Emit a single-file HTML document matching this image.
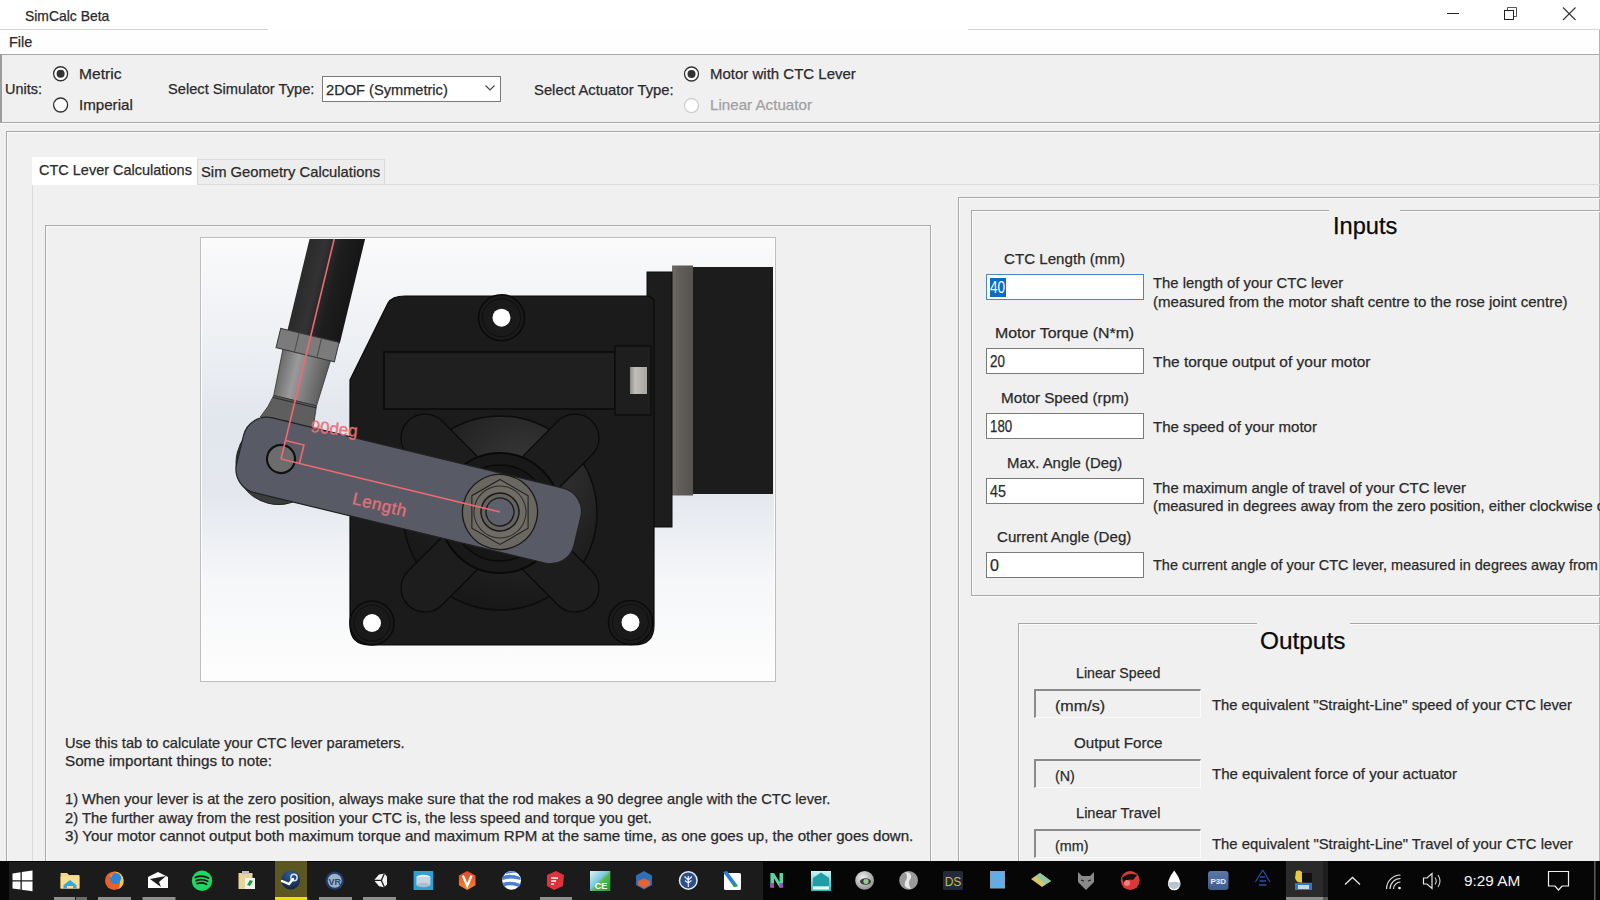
<!DOCTYPE html>
<html><head><meta charset="utf-8"><title>SimCalc Beta</title>
<style>
html,body{margin:0;padding:0}
body{width:1600px;height:900px;overflow:hidden;position:relative;background:#f0f0f0;font-family:"Liberation Sans",sans-serif;color:#000}
.a{position:absolute;box-sizing:border-box}
.t{position:absolute;white-space:pre;transform-origin:0 0;font-family:"Liberation Sans",sans-serif;-webkit-text-stroke:0.25px currentColor}
.hl{position:absolute;height:1px;background:#a9a9a9}
.vl{position:absolute;width:1px;background:#a9a9a9}
.wl{position:absolute;height:1px;background:#fff}
.wv{position:absolute;width:1px;background:#fff}
.tb{position:absolute;box-sizing:border-box;background:#fff;border:1px solid #7a7a7a}
.ob{position:absolute;box-sizing:border-box;background:#f0f0f0;border-top:2px solid #8a8a8a;border-left:2px solid #8a8a8a;border-bottom:1px solid #fbfbfb;border-right:1px solid #fbfbfb}
</style></head><body>
<!-- title bar -->
<div class="a" style="left:0;top:0;width:1600px;height:30px;background:#fff"></div>
<div class="a" style="left:0;top:29px;width:268px;height:1px;background:#d6d6d6"></div>
<div class="a" style="left:968px;top:29px;width:632px;height:1px;background:#d6d6d6"></div>
<svg class="a" style="left:1440px;top:0" width="160" height="30">
 <line x1="7" y1="13.5" x2="19" y2="13.5" stroke="#222" stroke-width="1"/>
 <path d="M67.5 10.5 V7.5 H76.5 V16.5 H73.5" fill="none" stroke="#555" stroke-width="1"/>
 <rect x="64.5" y="10.5" width="9" height="9" fill="none" stroke="#222" stroke-width="1"/>
 <path d="M123 7.5 L135.5 20 M135.5 7.5 L123 20" stroke="#333" stroke-width="1.1"/>
</svg>
<!-- menu bar -->
<div class="a" style="left:0;top:30px;width:1600px;height:24px;background:#fefefe"></div>
<div class="a" style="left:0;top:54px;width:1600px;height:1px;background:#a8a8a8"></div>
<div class="a" style="left:1598.5px;top:30px;width:1px;height:831px;background:#b4b4b4"></div>
<!-- toolbar panel -->
<div class="a" style="left:0;top:54px;width:2px;height:69px;background:#9c9c9c"></div>
<div class="a" style="left:0;top:122px;width:1600px;height:1px;background:#a8a8a8"></div>
<div class="a" style="left:0;top:123px;width:1600px;height:1px;background:#fafafa"></div>
<svg class="a" style="left:0;top:55px" width="900" height="66">
 <circle cx="60.6" cy="18.75" r="7" fill="#fff" stroke="#333" stroke-width="1.3"/>
 <circle cx="60.6" cy="18.75" r="4" fill="#333"/>
 <circle cx="60.6" cy="50" r="7" fill="#fff" stroke="#333" stroke-width="1.3"/>
 <circle cx="691.5" cy="19" r="7" fill="#fff" stroke="#333" stroke-width="1.3"/>
 <circle cx="691.5" cy="19" r="4" fill="#333"/>
 <circle cx="691.5" cy="50.6" r="7" fill="#fff" stroke="#cfcfcf" stroke-width="1.3"/>
</svg>
<div class="tb" style="left:322px;top:75.5px;width:179px;height:26px"></div>
<svg class="a" style="left:480px;top:80px" width="20" height="16"><path d="M5.5 5.5 L10 10 L14.5 5.5" fill="none" stroke="#444" stroke-width="1.1"/></svg>
<!-- main panel -->
<div class="a" style="left:6px;top:130.5px;width:1594px;height:1px;background:#a8a8a8"></div>
<div class="a" style="left:7px;top:131.5px;width:1593px;height:1px;background:#fbfbfb"></div>
<div class="a" style="left:6px;top:131px;width:1px;height:730px;background:#a8a8a8"></div>
<div class="a" style="left:7px;top:132px;width:1px;height:729px;background:#fbfbfb"></div>
<!-- tabs -->
<div class="a" style="left:197px;top:158.5px;width:188px;height:26px;background:#ededed;border:1px solid #dadada;border-bottom:none"></div>
<div class="a" style="left:32px;top:184px;width:1568px;height:1px;background:#dadada"></div>
<div class="a" style="left:32px;top:184px;width:1px;height:677px;background:#dadada"></div>
<div class="a" style="left:32px;top:157px;width:165px;height:28px;background:#fff"></div>
<!-- image group box -->
<div class="a" style="left:45px;top:224.5px;width:886px;height:1px;background:#a8a8a8"></div>
<div class="a" style="left:46px;top:225.5px;width:884px;height:1px;background:#fbfbfb"></div>
<div class="a" style="left:45px;top:225px;width:1px;height:636px;background:#a8a8a8"></div>
<div class="a" style="left:46px;top:226px;width:1px;height:635px;background:#fbfbfb"></div>
<div class="a" style="left:930px;top:225px;width:1px;height:636px;background:#a8a8a8"></div>
<div class="a" style="left:931px;top:225px;width:1px;height:636px;background:#fbfbfb"></div>
<!-- picture -->
<div class="a" style="left:200px;top:237px;width:576px;height:445px;background:#fff;border:1px solid #bdbdbd"></div>
<svg class="a" style="left:0;top:0" width="1600" height="900" viewBox="0 0 1600 900">
<defs>
 <linearGradient id="bg" x1="0" y1="0" x2="0" y2="1">
  <stop offset="0" stop-color="#fafafb"/>
  <stop offset="0.18" stop-color="#f0f2f5"/>
  <stop offset="0.42" stop-color="#e2e6ed"/>
  <stop offset="0.58" stop-color="#e4e8ee"/>
  <stop offset="0.78" stop-color="#f6f7f9"/>
  <stop offset="1" stop-color="#fdfdfd"/>
 </linearGradient>
 <radialGradient id="flg" cx="0.62" cy="0.3" r="0.7">
  <stop offset="0" stop-color="#3a3a3a"/>
  <stop offset="0.6" stop-color="#222"/>
  <stop offset="1" stop-color="#181818"/>
 </radialGradient>
 <linearGradient id="rod" x1="0" y1="0" x2="1" y2="0">
  <stop offset="0" stop-color="#2a2a2a"/>
  <stop offset="0.3" stop-color="#333"/>
  <stop offset="0.6" stop-color="#1e1e1e"/>
  <stop offset="1" stop-color="#161616"/>
 </linearGradient>
 <linearGradient id="rodend" x1="0" y1="0" x2="1" y2="0">
  <stop offset="0" stop-color="#6a6a6a"/>
  <stop offset="0.35" stop-color="#9a9a9a"/>
  <stop offset="1" stop-color="#5a5a5a"/>
 </linearGradient>
 <linearGradient id="ring" x1="0" y1="0" x2="1" y2="0">
  <stop offset="0" stop-color="#6e6a65"/>
  <stop offset="0.3" stop-color="#625f5a"/>
  <stop offset="1" stop-color="#56534f"/>
 </linearGradient>
 <linearGradient id="sq" x1="0" y1="0" x2="1" y2="0">
  <stop offset="0" stop-color="#8e8b86"/>
  <stop offset="0.3" stop-color="#c2bfba"/>
  <stop offset="1" stop-color="#a9a6a1"/>
 </linearGradient>
 <clipPath id="pic"><rect x="202" y="239" width="572" height="441"/></clipPath>
</defs>
<g clip-path="url(#pic)">
 <rect x="202" y="239" width="572" height="441" fill="url(#bg)"/>
 <!-- motor block -->
 <rect x="693" y="267" width="80" height="227" fill="#1c1c1c"/>
 <rect x="672" y="265.5" width="21" height="230" fill="url(#ring)"/>
 <rect x="647" y="272" width="25" height="255" fill="#1d1d1d" stroke="#0c0c0c" stroke-width="1"/>
 <!-- gearbox plate -->
 <path d="M405 296 H649 V296 L654 300 V625 Q654 645 634 645 H370 Q350 645 350 625 V380 L388 303 Q392 296 405 296 Z" fill="#1b1b1b" stroke="#0a0a0a" stroke-width="1.2"/>
 <!-- top hole -->
 <circle cx="501.5" cy="317.7" r="23" fill="#1a1a1a" stroke="#0a0a0a" stroke-width="1.5"/>
 <circle cx="501.5" cy="317.7" r="19" fill="none" stroke="#0e0e0e" stroke-width="1"/>
 <circle cx="501.5" cy="317.7" r="9" fill="#fff"/>
 <!-- slot -->
 <rect x="384" y="352" width="231" height="57" fill="#1f1f1f" stroke="#0a0a0a" stroke-width="1.6"/>
 <rect x="615" y="346" width="36" height="69" fill="#1e1e1e" stroke="#0a0a0a" stroke-width="1.2"/>
 <rect x="630" y="367" width="17" height="27" fill="url(#sq)"/>
 <!-- bottom holes -->
 <circle cx="372" cy="623" r="22" fill="#1a1a1a" stroke="#0a0a0a" stroke-width="1.5"/>
 <circle cx="372" cy="623" r="18" fill="none" stroke="#0e0e0e" stroke-width="1"/>
 <circle cx="372" cy="623" r="9" fill="#fff"/>
 <circle cx="630.5" cy="622.4" r="22" fill="#1a1a1a" stroke="#0a0a0a" stroke-width="1.5"/>
 <circle cx="630.5" cy="622.4" r="18" fill="none" stroke="#0e0e0e" stroke-width="1"/>
 <circle cx="630.5" cy="622.4" r="9" fill="#fff"/>
 <!-- output flange -->
 <circle cx="500" cy="513" r="97" fill="url(#flg)" stroke="#0c0c0c" stroke-width="1.5"/>
 <g transform="translate(500 513) rotate(45)" fill="#1d1d1d" stroke="#0b0b0b" stroke-width="1.3">
  <rect x="-130" y="-24" width="260" height="48" rx="24"/>
  <rect x="-24" y="-130" width="48" height="260" ry="24"/>
 </g>
 <circle cx="500" cy="513" r="60" fill="#191919" stroke="#0a0a0a" stroke-width="2"/>
 <circle cx="500" cy="513" r="48" fill="#161616" stroke="#0a0a0a" stroke-width="1.5"/>
 <!-- rod & lever in rotated frame -->
 <g transform="translate(281 459) rotate(13.6)">
  <rect x="-24" y="-260" width="54" height="134" fill="url(#rod)"/>
  <path d="M-24 -108 L25 -108 L22 -60 L-22 -60 Z" fill="url(#rodend)" stroke="#3a3a3a" stroke-width="0.8"/>
  <path d="M-22 -60 L22 -60 L24 -36 L-30 -36 Q-24 -48 -22 -60 Z" fill="#5e5e5e" stroke="#333" stroke-width="0.8"/>
  <line x1="-22" y1="-58" x2="22" y2="-58" stroke="#2a2a2a" stroke-width="1"/>
  <path d="M-31 -127 L29 -127 L29 -107 L-31 -107 Z" fill="#7b7b7b" stroke="#3a3a3a" stroke-width="1"/>
  <line x1="-12" y1="-127" x2="-12" y2="-107" stroke="#4a4a4a" stroke-width="1"/>
  <line x1="11" y1="-127" x2="11" y2="-107" stroke="#4a4a4a" stroke-width="1"/>
  <circle id="eyebump" cx="-2" cy="4" r="42" fill="#3c3c3e" stroke="#222" stroke-width="1"/>
  <!-- lever -->
  <rect x="-42" y="-38" width="347" height="77" rx="24" fill="#585a65" stroke="#222" stroke-width="1.2"/>
  <circle cx="0" cy="0" r="14" fill="#6c6c6c" stroke="#111" stroke-width="2.2"/>
  <!-- nut -->
  <circle cx="225.3" cy="0" r="37.5" fill="#6a6761" stroke="#1a1a1a" stroke-width="1.3"/>
  <polygon points="225.3,-32.5 253.4,-16.2 253.4,16.2 225.3,32.5 197.2,16.2 197.2,-16.3" transform="rotate(-13.6 225.3 0)" fill="#6f6c66" stroke="#222" stroke-width="1.1"/>
  <circle cx="225.3" cy="0" r="26" fill="none" stroke="#2a2a2a" stroke-width="1"/>
  <circle cx="225.3" cy="0" r="19" fill="#66635e" stroke="#1a1a1a" stroke-width="1.5"/>
  <circle cx="225.3" cy="0" r="14" fill="#5d5f6a" stroke="#1a1a1a" stroke-width="1.3"/>
  <!-- red annotation -->
  <g stroke="#ee6a72" stroke-width="1.6" fill="none">
   <line x1="0" y1="0" x2="0" y2="-260"/>
   <line x1="0" y1="0" x2="225.3" y2="0"/>
   <path d="M0 -19 H19 V0"/>
  </g>
  <text x="22" y="-33" transform="rotate(-8 22 -33)" font-family="Liberation Sans" font-size="17" font-weight="normal" fill="#e8707a" opacity="0.95" stroke="#e8707a" stroke-width="0.4">90deg</text>
  <text x="79" y="27" font-family="Liberation Sans" font-size="17" font-weight="normal" fill="#e0707a" stroke="#e0707a" stroke-width="0.4" letter-spacing="0.6">Length</text>
 </g>
</g>
</svg>

<!-- right outer group -->
<div class="a" style="left:958px;top:197px;width:642px;height:1px;background:#a8a8a8"></div>
<div class="a" style="left:959px;top:198px;width:641px;height:1px;background:#fbfbfb"></div>
<div class="a" style="left:958px;top:197px;width:1px;height:664px;background:#a8a8a8"></div>
<div class="a" style="left:959px;top:198px;width:1px;height:663px;background:#fbfbfb"></div>
<!-- inputs group -->
<div class="a" style="left:970.5px;top:209.5px;width:358px;height:1px;background:#a8a8a8"></div>
<div class="a" style="left:1400px;top:209.5px;width:200px;height:1px;background:#a8a8a8"></div>
<div class="a" style="left:971.5px;top:210.5px;width:357px;height:1px;background:#fbfbfb"></div>
<div class="a" style="left:1400px;top:210.5px;width:200px;height:1px;background:#fbfbfb"></div>
<div class="a" style="left:970.5px;top:209.5px;width:1px;height:386px;background:#a8a8a8"></div>
<div class="a" style="left:971.5px;top:210.5px;width:1px;height:385px;background:#fbfbfb"></div>
<div class="a" style="left:970.5px;top:595px;width:630px;height:1px;background:#a8a8a8"></div>
<div class="a" style="left:970.5px;top:596px;width:630px;height:1px;background:#fbfbfb"></div>
<!-- textboxes -->
<div class="tb" style="left:986px;top:274px;width:158px;height:26px;border-color:#4a86bf"></div>
<div class="a" style="left:990px;top:278px;width:16px;height:18.5px;background:#0b6cc4"></div>
<div class="tb" style="left:986px;top:348px;width:158px;height:26px"></div>
<div class="tb" style="left:986px;top:413px;width:158px;height:26px"></div>
<div class="tb" style="left:986px;top:478px;width:158px;height:26px"></div>
<div class="tb" style="left:986px;top:552px;width:158px;height:26px"></div>
<!-- outputs group -->
<div class="a" style="left:1018px;top:623px;width:239px;height:1px;background:#a8a8a8"></div>
<div class="a" style="left:1350px;top:623px;width:250px;height:1px;background:#a8a8a8"></div>
<div class="a" style="left:1019px;top:624px;width:238px;height:1px;background:#fbfbfb"></div>
<div class="a" style="left:1350px;top:624px;width:250px;height:1px;background:#fbfbfb"></div>
<div class="a" style="left:1018px;top:623px;width:1px;height:238px;background:#a8a8a8"></div>
<div class="a" style="left:1019px;top:624px;width:1px;height:237px;background:#fbfbfb"></div>
<div class="ob" style="left:1034px;top:688.5px;width:167px;height:29px"></div>
<div class="ob" style="left:1034px;top:758.5px;width:167px;height:29.5px"></div>
<div class="ob" style="left:1034px;top:828.5px;width:167px;height:29.5px"></div>
<svg class="a" style="left:0;top:861px" width="1600" height="39" viewBox="0 861 1600 39">
<defs>
 <radialGradient id="ff" cx="0.6" cy="0.3" r="0.8"><stop offset="0" stop-color="#2a6ad8"/><stop offset="0.45" stop-color="#f2a51d"/><stop offset="1" stop-color="#d9401c"/></radialGradient>
 <radialGradient id="stm" cx="0.5" cy="0.2" r="0.9"><stop offset="0" stop-color="#2d5f9a"/><stop offset="1" stop-color="#0e1d3c"/></radialGradient>
 <linearGradient id="vhex" x1="0" y1="0" x2="0" y2="1"><stop offset="0" stop-color="#e8442a"/><stop offset="1" stop-color="#f08a2a"/></linearGradient>
 <linearGradient id="ce" x1="0" y1="0" x2="1" y2="1"><stop offset="0" stop-color="#dff4f2"/><stop offset="0.45" stop-color="#7ac7e0"/><stop offset="0.55" stop-color="#59b84a"/><stop offset="1" stop-color="#1f9a3a"/></linearGradient>
 <linearGradient id="maya" x1="0" y1="0" x2="0" y2="1"><stop offset="0" stop-color="#d6f3f3"/><stop offset="1" stop-color="#29b7bd"/></linearGradient>
 <radialGradient id="eye" cx="0.4" cy="0.35" r="0.7"><stop offset="0" stop-color="#f0f0f0"/><stop offset="1" stop-color="#8d8d8d"/></radialGradient>
 <linearGradient id="p3d" x1="0" y1="0" x2="0" y2="1"><stop offset="0" stop-color="#5a78a8"/><stop offset="1" stop-color="#3f5c8a"/></linearGradient>
</defs>
<rect x="0" y="861" width="1600" height="39" fill="#060606"/>
<rect x="9" y="862" width="754" height="38" fill="#1b1b1b"/>
<!-- windows logo -->
<g fill="#fff">
 <path d="M12.5 873.5 L20.5 872.3 V880.3 H12.5 Z"/>
 <path d="M21.8 872.1 L32.5 870.6 V880.3 H21.8 Z"/>
 <path d="M12.5 881.6 H20.5 V889.6 L12.5 888.5 Z"/>
 <path d="M21.8 881.6 H32.5 V891.2 L21.8 889.8 Z"/>
</g>
<!-- explorer -->
<path d="M60.6 873 H67 L69 875 H79.4 V888.6 H60.6 Z" fill="#f5d67a"/>
<rect x="60.6" y="876.5" width="18.8" height="12" fill="#f8df8e"/>
<path d="M63.5 885 L70 880 L76.5 885 V888.6 H73 V886 H67 V888.6 H63.5 Z" fill="#3fa7e0"/>
<!-- firefox -->
<circle cx="114.3" cy="880.7" r="9.3" fill="#e8602a"/>
<path d="M114.3 871.4 A9.3 9.3 0 0 1 123.6 880.7 A9.3 9.3 0 0 1 118 889.2 Q121 884 119.5 879 Z" fill="#f5c64a"/>
<circle cx="115.5" cy="878.3" r="5.6" fill="#2a86d8"/>
<path d="M109 876 Q111 872 116 872.3 Q112 874 111.5 878 Z" fill="#f07a3a"/>
<!-- mail -->
<path d="M148 877 L158 872 L168 877 V888 H148 Z" fill="#fff"/>
<path d="M150 879 L166 876 L159 882 L161 887 Z" fill="#1b1b1b"/>
<!-- spotify -->
<circle cx="202" cy="880.7" r="10.2" fill="#1ed760"/>
<g stroke="#141414" stroke-width="1.8" fill="none" stroke-linecap="round">
 <path d="M195.5 877.3 Q202 874.6 208.5 878"/>
 <path d="M196.2 880.6 Q202 878.4 207.6 881.2"/>
 <path d="M197 883.6 Q202 882 206.5 884.2"/>
</g>
<!-- clipboard -->
<rect x="238.5" y="873" width="14" height="16" fill="#e8d59a"/>
<rect x="242" y="871" width="7" height="3" fill="#bfbfbf"/>
<rect x="245" y="878" width="10" height="11" fill="#f4f4f4"/>
<path d="M247 885 L250 880 L253 881 L250 886 Z" fill="#1aa03a"/>
<!-- steam highlighted -->
<rect x="275" y="861" width="32" height="39" fill="#5c5620"/>
<rect x="275" y="897" width="32" height="3" fill="#eee000"/>
<circle cx="290.7" cy="880" r="9.4" fill="url(#stm)"/>
<circle cx="294" cy="877.5" r="3.2" fill="none" stroke="#dfe6ee" stroke-width="1.4"/>
<path d="M282 881 L289 884 L293 879" fill="none" stroke="#fff" stroke-width="2.4" stroke-linecap="round"/>
<!-- VR -->
<circle cx="334.7" cy="880.7" r="9.2" fill="#1d3f6e"/>
<circle cx="334.7" cy="880.7" r="7" fill="#9fb0c8"/>
<text x="334.7" y="884.5" text-anchor="middle" font-family="Liberation Sans" font-weight="bold" font-size="9" fill="#2a4a78">VR</text>
<!-- unity -->
<path d="M374 880.3 L379 874.5 L384.5 873.5 L387 876.5 V884.5 L384 887.3 L379 886.3 Z" fill="#f4f4f4"/>
<path d="M374 880.3 H381.3 L384.3 873.8 M381.3 880.3 L384.3 887" fill="none" stroke="#1b1b1b" stroke-width="1.3"/>
<!-- db -->
<rect x="413.6" y="871" width="19.6" height="19" fill="#2ba2d6"/>
<ellipse cx="423.4" cy="877" rx="7" ry="2.2" fill="#e6eef5"/>
<rect x="416.4" y="877" width="14" height="8" fill="#c8d4de"/>
<ellipse cx="423.4" cy="885" rx="7" ry="2.2" fill="#b0bccb"/>
<!-- V hex -->
<path d="M467.2 870.9 L475.5 875.6 V885.2 L467.2 889.9 L458.9 885.2 V875.6 Z" fill="url(#vhex)"/>
<path d="M462.8 875.5 L467.2 886 L471.6 875.5" fill="none" stroke="#fff" stroke-width="2.2"/>
<!-- google earth -->
<circle cx="511.6" cy="880.4" r="9.4" fill="#fff"/>
<path d="M503 876 Q511 873 520 877 L520.5 880 Q511 877 502.5 880 Z" fill="#4a7fdc"/>
<path d="M502.6 883 Q511 880 520.6 884 L519 887 Q511 884 504 886.5 Z" fill="#4a7fdc"/>
<path d="M506 872.5 Q512 870 517 872.5 Q511 872.5 506 874 Z" fill="#4a7fdc"/>
<!-- sketchup -->
<path d="M547 875 L556 871 L564 875 L563 886 L554 890 L547 886 Z" fill="#e0323c"/>
<path d="M551 878 H558 M551 881 H556 M551 884 H554" stroke="#fff" stroke-width="1.4"/>
<rect x="540" y="897" width="32" height="3" fill="#8f8f8f"/>
<!-- CE -->
<rect x="590" y="871" width="20.3" height="20" fill="url(#ce)"/>
<text x="601" y="889" text-anchor="middle" font-family="Liberation Sans" font-weight="bold" font-size="9" fill="#fff">CE</text>
<!-- hex multi -->
<path d="M644 871 L652 875.5 V885 L644 889.5 L636 885 V875.5 Z" fill="#2f6fb8"/>
<path d="M638 881 L644 878.5 L650 881 V885 L644 888.5 L638 885 Z" fill="#e0643a"/>
<!-- sourcetree circle -->
<circle cx="688.3" cy="880.4" r="9.5" fill="#e8eef5"/>
<circle cx="688.3" cy="880.4" r="8" fill="#2c4f8a"/>
<path d="M688.3 887 V876 M688.3 880 L684.5 876.5 M688.3 880 L692 876.5 M688.3 883 L685 880.5 M688.3 883 L691.5 880.5" stroke="#e8eef5" stroke-width="1.2"/>
<!-- sketchbook -->
<rect x="724" y="873" width="17" height="17" rx="1.5" fill="#fafafa"/>
<path d="M723 872 L727 871 L738 886 L734 887 Z" fill="#2f7fd0"/>
<path d="M731 882 L738 886 L734 887 Z" fill="#2aa060"/>
<!-- N -->
<path d="M770.4 873 H774 L779.5 882 V873 H783 V887.6 H779.5 L774 878.5 V887.6 H770.4 Z" fill="#5fd0a0"/>
<path d="M770.4 883 H774 V887.6 H770.4 Z M779.5 883 H783 V887.6 H779.5 Z" fill="#9a4fc0"/>
<!-- maya -->
<rect x="811" y="871" width="20" height="20" fill="url(#maya)"/>
<path d="M813 878 L821 872.5 L829 878 V886 H813 Z" fill="#1f9ea6"/>
<rect x="813" y="886.5" width="16" height="3" fill="#e5f7f7"/>
<!-- eye -->
<circle cx="864.6" cy="880.4" r="9.4" fill="url(#eye)"/>
<ellipse cx="865.5" cy="881.5" rx="5.5" ry="3.2" fill="#3a3a3a"/>
<ellipse cx="866" cy="881.5" rx="2.6" ry="2.4" fill="#8fd08a"/>
<!-- s sphere -->
<circle cx="908.6" cy="880.4" r="9.4" fill="#9a9a9a"/>
<path d="M905 872 Q912 872 911 878 Q907 882 911 889 Q903 888 905 882 Q909 876 905 872 Z" fill="#e8e8e8"/>
<!-- DS -->
<rect x="943" y="871" width="20" height="19" rx="1.5" fill="#222b38"/>
<text x="953" y="886" text-anchor="middle" font-family="Liberation Sans" font-size="12" fill="#d8b74a">DS</text>
<!-- film -->
<rect x="990" y="871" width="15" height="17.5" fill="#8aa0b8"/>
<rect x="992" y="872.5" width="11" height="6.5" fill="#5ab0ee"/>
<rect x="992" y="880.5" width="11" height="6.5" fill="#5ab0ee"/>
<!-- card -->
<path d="M1031 879 L1040 873 L1051 881 L1042 887 Z" fill="#d8c46a"/>
<path d="M1040 873 L1051 881 L1046 884 L1036 876 Z" fill="#8cc7a8"/>
<!-- wolf -->
<path d="M1078 872 L1082 876 H1090 L1094 872 V882 L1086 890 L1078 882 Z" fill="#8a8a8a"/>
<path d="M1081 880 L1084 881 M1091 880 L1088 881" stroke="#222" stroke-width="1.2"/>
<!-- red circle -->
<circle cx="1130.2" cy="880.5" r="9.4" fill="#d83a3a"/>
<path d="M1122 878 Q1128 872 1137 875 L1133 880 Q1128 878 1124 884 Z" fill="#111"/>
<circle cx="1127" cy="883" r="3" fill="#f08080"/>
<!-- drop -->
<path d="M1174.2 870.5 Q1180.5 879 1180.5 884 A6.3 6.3 0 0 1 1167.9 884 Q1167.9 879 1174.2 870.5 Z" fill="#fff"/>
<path d="M1168.2 883 Q1174 880.5 1180.3 883 A6.1 6.1 0 0 1 1168.2 884 Z" fill="#b9c4cf"/>
<!-- P3D -->
<rect x="1208" y="871" width="20.5" height="19" rx="3" fill="url(#p3d)"/>
<text x="1218.2" y="884.3" text-anchor="middle" font-family="Liberation Sans" font-weight="bold" font-size="8" fill="#eef">P3D</text>
<!-- traffic -->
<path d="M1262.7 870 L1270 882 M1262.7 870 L1255.4 882" stroke="#2a4fa8" stroke-width="1.2" fill="none"/>
<path d="M1260 877 H1265 M1259.5 881 H1266 M1259 885 H1266.5" stroke="#2a4fa8" stroke-width="1.6"/>
<!-- python highlighted -->
<rect x="1286" y="861" width="37" height="39" fill="#2a2a2a"/>
<rect x="1323" y="861" width="5" height="39" fill="#1e1e1e"/>
<rect x="1286" y="897" width="37" height="3" fill="#8c8c8c"/>
<rect x="1323" y="897" width="5" height="3" fill="#5a5a5a"/>
<rect x="1295" y="883" width="17" height="7" fill="#2e79c0"/>
<rect x="1298" y="885" width="11" height="4" fill="#c8d6e6"/>
<path d="M1296 871 Q1302 869 1303 875 V882 Q1297 884 1295 878 Z" fill="#e6cc3a"/>
<rect x="1302" y="873" width="10" height="9" fill="#111"/>
<!-- underlines for running apps -->
<rect x="54" y="897" width="21" height="3" fill="#8f8f8f"/>
<rect x="76" y="897" width="11" height="3" fill="#6a6a6a"/>
<rect x="98" y="897" width="33" height="3" fill="#8f8f8f"/>
<rect x="142.5" y="897" width="33" height="3" fill="#8f8f8f"/>
<rect x="319" y="897" width="33" height="3" fill="#8f8f8f"/>
<rect x="363" y="897" width="33" height="3" fill="#8f8f8f"/>
<!-- tray -->
<path d="M1345 884.5 L1352.5 877.5 L1360 884.5" fill="none" stroke="#e8e8e8" stroke-width="1.3"/>
<g fill="none" stroke="#e0e0e0" stroke-width="1.2">
 <path d="M1386.5 889 A14 14 0 0 1 1400.5 875"/>
 <path d="M1390 889 A10.5 10.5 0 0 1 1400.5 878.5"/>
 <path d="M1393.5 889 A7 7 0 0 1 1400.5 882"/>
</g>
<circle cx="1399.5" cy="888" r="1.3" fill="#fff"/>
<path d="M1423.5 878 H1427 L1432 873.5 V888.5 L1427 884 H1423.5 Z" fill="none" stroke="#e8e8e8" stroke-width="1.2"/>
<path d="M1435 877.5 Q1437.5 881 1435 884.5 M1438 875 Q1442 881 1438 887" fill="none" stroke="#cfcfcf" stroke-width="1.1"/>
<path d="M1548.5 871.5 H1568.5 V886 H1562 L1558.5 890 L1555 886 H1548.5 Z" fill="none" stroke="#f0f0f0" stroke-width="1.2"/>
<rect x="1594" y="861" width="1.5" height="39" fill="#5a5a5a"/>
</svg>

<div class="t" id="title" style="left:25.40px;top:8.93px;font-size:14.5px;line-height:14.5px;color:#2a2a2a;transform:scaleX(0.9593);">SimCalc Beta</div>
<div class="t" id="file" style="left:8.50px;top:34.00px;font-size:15px;line-height:15px;color:#2a2a2a;transform:scaleX(0.9658);">File</div>
<div class="t" id="units" style="left:4.80px;top:81.30px;font-size:15px;line-height:15px;color:#2a2a2a;transform:scaleX(0.9642);">Units:</div>
<div class="t" id="metric" style="left:78.60px;top:66.05px;font-size:15px;line-height:15px;color:#2a2a2a;transform:scaleX(1.0398);">Metric</div>
<div class="t" id="imperial" style="left:78.60px;top:97.30px;font-size:15px;line-height:15px;color:#2a2a2a;transform:scaleX(1.0080);">Imperial</div>
<div class="t" id="selsim" style="left:168.20px;top:81.05px;font-size:15px;line-height:15px;color:#2a2a2a;transform:scaleX(0.9770);">Select Simulator Type:</div>
<div class="t" id="combo" style="left:325.70px;top:81.55px;font-size:15px;line-height:15px;color:#2a2a2a;transform:scaleX(0.9744);">2DOF (Symmetric)</div>
<div class="t" id="selact" style="left:533.80px;top:81.70px;font-size:15px;line-height:15px;color:#2a2a2a;transform:scaleX(0.9873);">Select Actuator Type:</div>
<div class="t" id="motor" style="left:710.00px;top:65.90px;font-size:15px;line-height:15px;color:#2a2a2a;transform:scaleX(0.9995);">Motor with CTC Lever</div>
<div class="t" id="linact" style="left:710.00px;top:97.40px;font-size:15px;line-height:15px;color:#a0a0a0;transform:scaleX(1.0102);">Linear Actuator</div>
<div class="t" id="tab1" style="left:38.50px;top:162.30px;font-size:15px;line-height:15px;color:#2a2a2a;transform:scaleX(0.9654);">CTC Lever Calculations</div>
<div class="t" id="tab2" style="left:200.95px;top:164.05px;font-size:15px;line-height:15px;color:#2a2a2a;transform:scaleX(0.9851);">Sim Geometry Calculations</div>
<div class="t" id="l1" style="left:64.70px;top:735.73px;font-size:14.5px;line-height:14.5px;color:#2a2a2a;transform:scaleX(1.0079);">Use this tab to calculate your CTC lever parameters.</div>
<div class="t" id="l2" style="left:64.70px;top:753.98px;font-size:14.5px;line-height:14.5px;color:#2a2a2a;transform:scaleX(1.0484);">Some important things to note:</div>
<div class="t" id="l3" style="left:64.70px;top:792.23px;font-size:14.5px;line-height:14.5px;color:#2a2a2a;transform:scaleX(1.0080);">1) When your lever is at the zero position, always make sure that the rod makes a 90 degree angle with the CTC lever.</div>
<div class="t" id="l4" style="left:64.70px;top:810.73px;font-size:14.5px;line-height:14.5px;color:#2a2a2a;transform:scaleX(1.0187);">2) The further away from the rest position your CTC is, the less speed and torque you get.</div>
<div class="t" id="l5" style="left:64.70px;top:828.98px;font-size:14.5px;line-height:14.5px;color:#2a2a2a;transform:scaleX(1.0389);">3) Your motor cannot output both maximum torque and maximum RPM at the same time, as one goes up, the other goes down.</div>
<div class="t" id="inputs" style="left:1332.60px;top:214.43px;font-size:24px;line-height:24px;color:#080808;transform:scaleX(0.9836);">Inputs</div>
<div class="t" id="ctclen" style="left:1004.00px;top:251.30px;font-size:15px;line-height:15px;color:#2a2a2a;transform:scaleX(1.0083);">CTC Length (mm)</div>
<div class="t" id="d1a" style="left:1153.00px;top:275.30px;font-size:15px;line-height:15px;color:#2a2a2a;transform:scaleX(0.9874);">The length of your CTC lever</div>
<div class="t" id="d1b" style="left:1153.00px;top:294.00px;font-size:15px;line-height:15px;color:#2a2a2a;transform:scaleX(1.0024);">(measured from the motor shaft centre to the rose joint centre)</div>
<div class="t" id="v1" style="left:990.00px;top:278.53px;font-size:16.5px;line-height:16.5px;color:#fff;transform:scaleX(0.8218);-webkit-text-stroke:0;">40</div>
<div class="t" id="torq" style="left:994.70px;top:324.80px;font-size:15px;line-height:15px;color:#2a2a2a;transform:scaleX(1.0588);">Motor Torque (N*m)</div>
<div class="t" id="v2" style="left:990.40px;top:353.03px;font-size:16.5px;line-height:16.5px;color:#2a2a2a;transform:scaleX(0.8109);">20</div>
<div class="t" id="d2" style="left:1153.00px;top:354.30px;font-size:15px;line-height:15px;color:#2a2a2a;transform:scaleX(1.0308);">The torque output of your motor</div>
<div class="t" id="speed" style="left:1000.90px;top:389.80px;font-size:15px;line-height:15px;color:#2a2a2a;transform:scaleX(1.0161);">Motor Speed (rpm)</div>
<div class="t" id="v3" style="left:990.40px;top:417.53px;font-size:16.5px;line-height:16.5px;color:#2a2a2a;transform:scaleX(0.8073);">180</div>
<div class="t" id="d3" style="left:1152.80px;top:418.80px;font-size:15px;line-height:15px;color:#2a2a2a;transform:scaleX(1.0032);">The speed of your motor</div>
<div class="t" id="maxang" style="left:1007.20px;top:455.30px;font-size:15px;line-height:15px;color:#2a2a2a;transform:scaleX(0.9950);">Max. Angle (Deg)</div>
<div class="t" id="v4" style="left:990.40px;top:483.03px;font-size:16.5px;line-height:16.5px;color:#2a2a2a;transform:scaleX(0.8653);">45</div>
<div class="t" id="d4a" style="left:1152.80px;top:479.80px;font-size:15px;line-height:15px;color:#2a2a2a;transform:scaleX(0.9929);">The maximum angle of travel of your CTC lever</div>
<div class="t" id="d4b" style="left:1152.80px;top:497.90px;font-size:15px;line-height:15px;color:#2a2a2a;transform:scaleX(0.9820);">(measured in degrees away from the zero position, either clockwise or anticlockwise)</div>
<div class="t" id="curang" style="left:997.20px;top:529.30px;font-size:15px;line-height:15px;color:#2a2a2a;transform:scaleX(1.0069);">Current Angle (Deg)</div>
<div class="t" id="v5" style="left:990.40px;top:556.53px;font-size:16.5px;line-height:16.5px;color:#2a2a2a;transform:scaleX(0.9753);">0</div>
<div class="t" id="d5" style="left:1152.80px;top:557.30px;font-size:15px;line-height:15px;color:#2a2a2a;transform:scaleX(0.9649);">The current angle of your CTC lever, measured in degrees away from the zero position</div>
<div class="t" id="outputs" style="left:1260.20px;top:629.18px;font-size:24px;line-height:24px;color:#080808;transform:scaleX(1.0155);">Outputs</div>
<div class="t" id="linspd" style="left:1075.90px;top:664.80px;font-size:15px;line-height:15px;color:#2a2a2a;transform:scaleX(0.9445);">Linear Speed</div>
<div class="t" id="o1" style="left:1054.95px;top:697.80px;font-size:15px;line-height:15px;color:#2a2a2a;transform:scaleX(1.0735);">(mm/s)</div>
<div class="t" id="e1" style="left:1211.90px;top:696.60px;font-size:15px;line-height:15px;color:#2a2a2a;transform:scaleX(0.9863);">The equivalent &quot;Straight-Line&quot; speed of your CTC lever</div>
<div class="t" id="outf" style="left:1073.60px;top:734.80px;font-size:15px;line-height:15px;color:#2a2a2a;transform:scaleX(1.0103);">Output Force</div>
<div class="t" id="o2" style="left:1055.00px;top:768.30px;font-size:15px;line-height:15px;color:#2a2a2a;transform:scaleX(0.9550);">(N)</div>
<div class="t" id="e2" style="left:1212.10px;top:766.00px;font-size:15px;line-height:15px;color:#2a2a2a;transform:scaleX(1.0027);">The equivalent force of your actuator</div>
<div class="t" id="lintr" style="left:1076.00px;top:804.80px;font-size:15px;line-height:15px;color:#2a2a2a;transform:scaleX(0.9741);">Linear Travel</div>
<div class="t" id="o3" style="left:1055.00px;top:838.30px;font-size:15px;line-height:15px;color:#2a2a2a;transform:scaleX(0.9550);">(mm)</div>
<div class="t" id="e3" style="left:1212.10px;top:836.00px;font-size:15px;line-height:15px;color:#2a2a2a;transform:scaleX(0.9885);">The equivalent &quot;Straight-Line&quot; Travel of your CTC lever</div>
<div class="t" id="clock" style="left:1464.20px;top:874.13px;font-size:14.5px;line-height:14.5px;color:#f4f4f4;transform:scaleX(1.0573);-webkit-text-stroke:0;">9:29 AM</div>
</body></html>
